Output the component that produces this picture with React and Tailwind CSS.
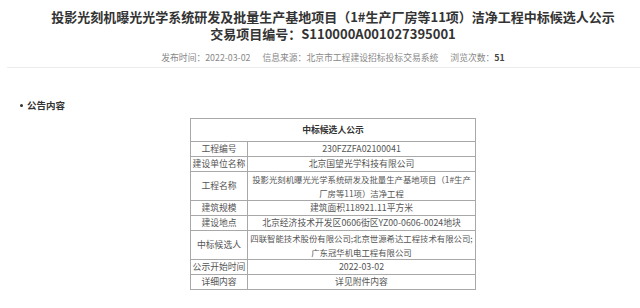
import React from 'react';

const rows = [
  { label: '工程编号', value: ['230FZZFA02100041'] },
  { label: '建设单位名称', value: ['北京国望光学科技有限公司'] },
  { label: '工程名称', value: ['投影光刻机曝光光学系统研发及批量生产基地项目（1#生产', '厂房等11项）洁净工程'] },
  { label: '建筑规模', value: ['建筑面积118921.11平方米'] },
  { label: '建设地点', value: ['北京经济技术开发区0606街区YZ00-0606-0024地块'] },
  { label: '中标候选人', value: ['四联智能技术股份有限公司;北京世源希达工程技术有限公司;', '广东冠华机电工程有限公司'] },
  { label: '公示开始时间', value: ['2022-03-02'] },
  { label: '详细内容', value: ['详见附件内容'] },
];

function App() {
  return (
    <div className="w-[640px] h-[308px] overflow-hidden bg-white text-[#333]" style={{ fontFamily: '"Noto Sans CJK SC", "Noto Sans", sans-serif' }}>
      <div className="pl-[26px] pt-[8px] text-center">
        <h1 className="text-[13px] leading-[17px] font-bold whitespace-nowrap">
          投影光刻机曝光光学系统研发及批量生产基地项目（1#生产厂房等11项）洁净工程中标候选人公示
        </h1>
        <h2 className="text-[13px] leading-[17px] font-bold">交易项目编号：S110000A001027395001</h2>
        <div className="mt-[10px] flex justify-center gap-[12px] text-[8.8px] leading-[12px] text-[#888]">
          <span>发布时间：2022-03-02</span>
          <span>信息来源：北京市工程建设招标投标交易系统</span>
          <span>浏览次数：<span className="font-semibold text-[#444]">51</span></span>
        </div>
      </div>
      <div className="ml-[7px] mt-[3px] border-b border-[#ececec]"></div>

      <div className="mt-[31px] pl-[20px] flex items-center gap-[2px] text-[9.5px] leading-[12px] font-bold text-[#333]">
        <span className="w-[3px] h-[3px] rounded-full bg-[#333]"></span>
        <span className="ml-[2px]">公告内容</span>
      </div>

      <div className="mt-[7px] pl-[26px] flex justify-center">
        <table className="table-fixed border-collapse w-[286px] text-[8.8px] text-[#555]">
          <colgroup>
            <col className="w-[57px]" />
            <col />
          </colgroup>
          <tbody>
            <tr className="h-[23px]">
              <td colSpan={2} className="border border-[#a8a8a8] text-center font-bold text-[#333] p-0">中标候选人公示</td>
            </tr>
            {rows.map((r) => (
              <tr key={r.label} className={r.value.length > 1 ? 'h-[29px]' : 'h-[15px]'}>
                <td className="border border-[#a8a8a8] text-center leading-[14px] p-0 whitespace-nowrap overflow-hidden">{r.label}</td>
                <td className={`border border-[#a8a8a8] text-center leading-[14px] p-0 whitespace-nowrap overflow-hidden ${r.value.length > 1 ? 'text-[8.4px]' : ''}`}>
                  {r.value.map((v, i) => (
                    <div key={i}>{v}</div>
                  ))}
                </td>
              </tr>
            ))}
          </tbody>
        </table>
      </div>
    </div>
  );
}

export default App;
